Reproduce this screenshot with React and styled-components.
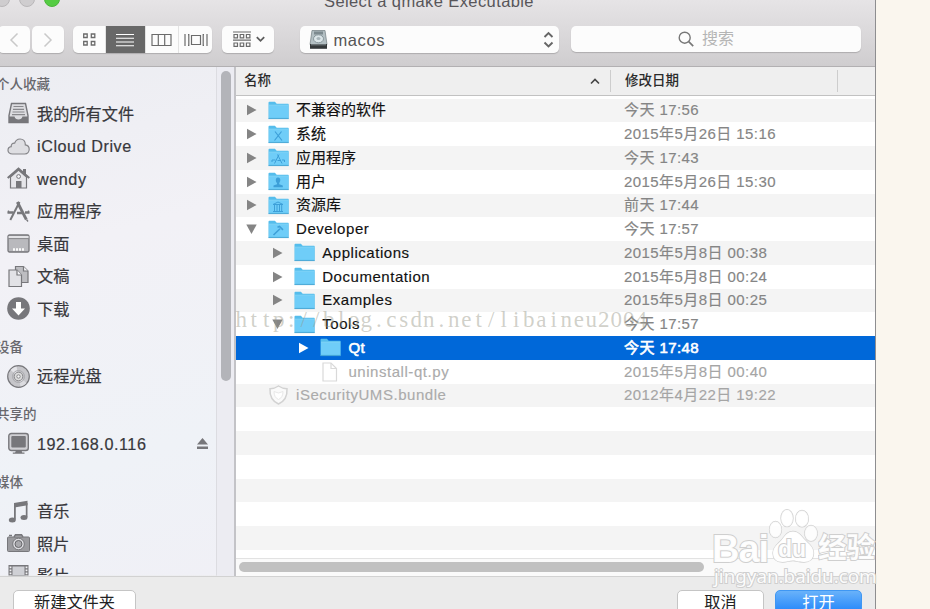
import React, { useState } from 'react';
import styled, { createGlobalStyle } from 'styled-components';

const favorites = [
    { label: "我的所有文件", icon: "files" },
    { label: "iCloud Drive", icon: "cloud" },
    { label: "wendy", icon: "home" },
    { label: "应用程序", icon: "apps" },
    { label: "桌面", icon: "desktop" },
    { label: "文稿", icon: "docs" },
    { label: "下载", icon: "download" }
];

const sections = [
    { title: "个人收藏", items: favorites },
    { title: "设备", items: [{ label: "远程光盘", icon: "disc" }] },
    { title: "共享的", items: [{ label: "192.168.0.116", icon: "monitor", eject: true }] },
    {
        title: "媒体",
        items: [
            { label: "音乐", icon: "music" },
            { label: "照片", icon: "camera" },
            { label: "影片", icon: "film" }
        ]
    }
];

const files = [
    { name: "不兼容的软件", date: "今天 17:56", level: 0, arrow: "right", kind: "folder" },
    { name: "系统", date: "2015年5月26日 15:16", level: 0, arrow: "right", kind: "folder", badge: "system" },
    { name: "应用程序", date: "今天 17:43", level: 0, arrow: "right", kind: "folder", badge: "apps" },
    { name: "用户", date: "2015年5月26日 15:30", level: 0, arrow: "right", kind: "folder", badge: "user" },
    { name: "资源库", date: "前天 17:44", level: 0, arrow: "right", kind: "folder", badge: "library" },
    { name: "Developer", date: "今天 17:57", level: 0, arrow: "down", kind: "folder", badge: "hammer" },
    { name: "Applications", date: "2015年5月8日 00:38", level: 1, arrow: "right", kind: "folder" },
    { name: "Documentation", date: "2015年5月8日 00:24", level: 1, arrow: "right", kind: "folder" },
    { name: "Examples", date: "2015年5月8日 00:25", level: 1, arrow: "right", kind: "folder" },
    { name: "Tools", date: "今天 17:57", level: 1, arrow: "down", kind: "folder" },
    { name: "Qt", date: "今天 17:48", level: 2, arrow: "right", kind: "folder" },
    { name: "uninstall-qt.py", date: "2015年5月8日 00:40", level: 2, kind: "file", disabled: true },
    { name: "iSecurityUMS.bundle", date: "2012年4月22日 19:22", level: 0, kind: "bundle", disabled: true }
];

const emptyRows = [13, 14, 15, 16, 17, 18, 19];

// Latin names are set a little wider than Chinese ones
const isLatin = (text) => /^[\x20-\x7e]+$/.test(text);

const sideIcons = {
    files: (
        <>
            <path d="M4.500 1.500h14l2.500 12v7H2v-7z" fill="#dcdce0" stroke="#77777b" strokeWidth="1.400" />
            <path d="M6.500 4.500h10M6 7.300h11M5.500 10h12M5 12.700h13" stroke="#88888c" strokeWidth="1.200" />
            <path d="M2 14.500h5.500q.7 3 4 3t4-3H21v6H2z" fill="#77777b" />
        </>
    ),
    cloud: (
        <path d="M5.500 19C2.500 19 1 17.200 1 15.200c0-2 1.500-3.400 3.200-3.600-.2-2.200 1.300-3.800 3.500-3.500C8.600 5.400 10.600 4 13 4c3.200 0 5.300 2.300 5.300 5.300v.6c2.300.3 3.900 2 3.900 4.400 0 2.600-1.800 4.700-4.400 4.700z" fill="#dedee2" stroke="#858589" strokeWidth="1.200" />
    ),
    home: (
        <>
            <path d="M3.500 10v11h16V10l-8-7z" fill="#e6e6ea" stroke="#77777b" strokeWidth="1.200" />
            <path d="M16 2h3v6l-3-3z" fill="#77777b" />
            <path d="M.7 11L11.500 1.800 22.300 11" fill="none" stroke="#77777b" strokeWidth="2.200" />
            <rect x="9" y="14" width="5.500" height="7" fill="#77777b" />
            <circle cx="11.600" cy="9.500" r="1.900" fill="#f2f2f5" stroke="#77777b" />
        </>
    ),
    apps: (
        <g stroke="#77777b" fill="none">
            <path d="M3.300 20L12.500 2" strokeWidth="2" />
            <path d="M10.300 2l9 17.500" strokeWidth="2.800" />
            <path d="M.5 12.500h6M10 13h5M18 12.500h4.500" strokeWidth="2.400" />
            <path d="M1.500 13v-2.500M21.500 13v-2.500M19.500 19.500l1.500 2" strokeWidth="1.300" />
        </g>
    ),
    desktop: (
        <>
            <rect x="1" y="3" width="21" height="17" rx="1.500" fill="#b9b9bd" stroke="#77777b" strokeWidth="1.300" />
            <path d="M1.600 5h20" stroke="#f2f2f5" strokeWidth="1.500" />
            <path d="M1.600 6.600h20" stroke="#88888c" />
            <path d="M6 17.500h11.500" stroke="#fafafa" strokeWidth="2.500" strokeDasharray="2 1" />
        </>
    ),
    docs: (
        <>
            <path d="M8.500 1.500h8l4.500 4.500v11.500H8.500z" fill="#bdbdc1" stroke="#77777b" strokeWidth="1.200" />
            <path d="M16.500 1.500V6H21" fill="#f2f2f5" stroke="#77777b" strokeWidth="1.200" />
            <path d="M2 5h8l4.500 5v11.500H2z" fill="#e2e2e6" stroke="#77777b" strokeWidth="1.200" />
            <path d="M10 5v5h4.500" fill="#f4f4f7" stroke="#77777b" strokeWidth="1.200" />
        </>
    ),
    download: (
        <>
            <circle cx="11.500" cy="11.500" r="11.300" fill="#77777b" />
            <path d="M9 5h5v6.500h4L11.500 18.500 5 11.500h4z" fill="#fff" />
        </>
    ),
    disc: (
        <>
            <circle cx="11.500" cy="11.500" r="10.800" fill="#c6c6ca" stroke="#77777b" strokeWidth="1.200" />
            <path d="M11.500 11.500L3.500 5Q6 2 9.500 1.500z" fill="#e4e4e8" />
            <path d="M11.500 11.500l8 6.500q-2.500 3-6 3.500z" fill="#dcdce0" />
            <circle cx="11.500" cy="11.500" r="6" fill="none" stroke="#aaaaae" />
            <circle cx="11.500" cy="11.500" r="4.300" fill="#ddd" stroke="#88888c" />
            <circle cx="11.500" cy="11.500" r="1.700" fill="#f5f5f5" stroke="#88888c" />
        </>
    ),
    monitor: (
        <>
            <rect x="1.800" y="1.500" width="19.500" height="17" rx="2.500" fill="#d0d0d4" stroke="#77777b" strokeWidth="1.400" />
            <rect x="4.300" y="4" width="14.500" height="11.500" rx="1" fill="#77777b" />
            <path d="M9 18.500h5.500l.7 2h2.300v1.200H5.800v-1.200h2.300z" fill="#77777b" />
        </>
    ),
    music: (
        <g fill="#77777b">
            <path d="M7 3l13.500-2.300v4.500L8.800 7.300V19.500H7z" />
            <path d="M18.800 3h1.700v14h-1.700z" />
            <ellipse cx="5.300" cy="20" rx="3.500" ry="2.500" />
            <ellipse cx="17" cy="17.400" rx="3.500" ry="2.500" />
        </g>
    ),
    camera: (
        <>
            <rect x=".5" y="5" width="22" height="14.500" rx="1" fill="#9b9b9f" stroke="#77777b" />
            <path d="M7 5l1.500-2.300h6L16 5M2 3.500h3" fill="#9b9b9f" stroke="#77777b" strokeWidth="1.500" />
            <circle cx="11.500" cy="12" r="5.800" fill="#dcdce0" stroke="#77777b" />
            <circle cx="11.500" cy="12" r="3.500" fill="#a9a9ad" stroke="#66666a" />
        </>
    ),
    film: (
        <>
            <rect x="1.500" y="0" width="20" height="22" fill="#77777b" />
            <rect x="5.500" y="1.500" width="12" height="8.500" fill="#cfd0d5" />
            <rect x="5.500" y="12" width="12" height="8" fill="#cfd0d5" />
            <path d="M3.500 1.500V20M19.500 1.500V20" stroke="#f2f2f5" strokeWidth="1.800" strokeDasharray="1.700 1.300" />
        </>
    )
};

const badges = {
    system: <path d="M7 6.500l7 9M13.500 6.500l-7 9" />,
    apps: <path d="M6.500 15.500L11 6.500M9.500 6.500l4.500 9M4 12h3.500M9.500 12.500h3M14 12h2.500M4 14v-2M16.500 14v-2" strokeWidth="1" />,
    user: <path d="M10 5.500c1.600 0 2.300 1.100 2.300 2.500S11.500 10.500 11.200 11v1.300l3.600 1.300v1.700H5.500v-1.700l3.500-1.300V11C8.300 10.300 7.800 9.200 7.800 8S8.500 5.500 10 5.500z" fill="#3d9fd8" stroke="none" />,
    library: <path d="M5 8.500L10 6l5 2.500zM5 15.500h10M6.500 9v6M9 9v6M11.500 9v6M13.700 9v6" strokeWidth="1" />,
    hammer: <path d="M5.500 15L12 8.700M9.500 7.300l2-.8 3.500 3.300" strokeWidth="1.600" />
};

const FolderIcon = ({ badge }) => (
    <svg width="21" height="19" viewBox="0 0 21 19">
        <path d="M.5 17.800V1.700q0-.9.900-.9h5.500l1.800 2h11.400q.6 0 .6.700v14.300z" fill="#55bdec" />
        <path d="M1 4.600h19.200v12.200H1z" fill="#6fcdf8" />
        <path d="M1 4.200h19.200" stroke="#8fdcfd" strokeWidth=".8" />
        <path d="M.5 17.600h20.200" stroke="#45a4d3" strokeWidth=".9" />
        {badge && <g fill="none" stroke="#3d9fd8" strokeWidth="1.200">{badges[badge]}</g>}
    </svg>
);

const FileIcon = () => (
    <svg width="21" height="20" viewBox="0 0 21 20">
        <path d="M3 1h8l5.500 5.500V19H3z" fill="#fff" stroke="#d9d9d9" strokeWidth="1.200" />
        <path d="M11 1v5.500h5.500" fill="none" stroke="#d9d9d9" strokeWidth="1.200" />
    </svg>
);

const BundleIcon = () => (
    <svg width="21" height="20" viewBox="0 0 21 20">
        <path d="M10.500 1q4 2.700 8.500 2.700.7 11-8.500 15.300Q1.300 14.700 2 3.700 6.500 3.700 10.500 1z" fill="#fafafa" stroke="#d2d2d2" strokeWidth="1.500" />
        <path d="M6 6.500l4.500 1.500 4.500-1.500q0 6-4.500 8-4.500-2-4.500-8z" fill="#fff" stroke="#e8e8e8" />
    </svg>
);

const RowIcon = ({ kind, badge }) => {
    if (kind === "file") return <FileIcon />;
    if (kind === "bundle") return <BundleIcon />;
    return <FolderIcon badge={badge} />;
};

const Paw = () => (
    <PawSvg width="54" height="58" viewBox="766 507 54 58">
        <g fill="#fff" fillOpacity=".8" stroke="#cfcfcf" strokeWidth="1.300">
            <ellipse cx="775.500" cy="529.500" rx="6" ry="8" />
            <ellipse cx="787" cy="518.200" rx="6" ry="8.500" />
            <ellipse cx="802" cy="518.700" rx="6.400" ry="8.200" />
            <ellipse cx="811" cy="533.300" rx="6.300" ry="7.800" />
            <path d="M793 531.500c6 0 8 4.500 12 8.500s8.500 7 8.500 13-4 9.300-10 9-7-1.500-10.500-1.500-6 1.500-10.500 1.500c-6 0-9.500-3-9.500-9s5-9 8.500-13 5.500-8.500 11.500-8.500z" fillOpacity=".95" />
        </g>
    </PawSvg>
);

const App = () => {
    const [selected, setSelected] = useState("Qt");

    return (
        <Page>
            <GlobalStyle />
            <Window>
                <TitleBar>
                    <Lights>
                        <Light />
                        <Light />
                        <Light $on />
                    </Lights>
                    <Title>Select a qmake Executable</Title>
                </TitleBar>
                <Toolbar>
                    <NavButton>
                        <svg width="12" height="16" viewBox="0 0 12 16"><path d="M9.500 1.500L3 8l6.500 6.500" fill="none" stroke="#c9c9c9" strokeWidth="1.500" /></svg>
                    </NavButton>
                    <NavButton>
                        <svg width="12" height="16" viewBox="0 0 12 16"><path d="M2.500 1.500L9 8l-6.500 6.500" fill="none" stroke="#c9c9c9" strokeWidth="1.500" /></svg>
                    </NavButton>
                    <Segments>
                        <Segment $width={33}>
                            <svg width="15" height="15" viewBox="0 0 15 15" fill="none" stroke="#6b6b6b" strokeWidth="1.300">
                                <path d="M1.700 2h3.500v3.500H1.700zM9.300 2h3.500v3.500H9.300zM1.700 9.500h3.500V13H1.700zM9.300 9.500h3.500V13H9.300z" />
                            </svg>
                        </Segment>
                        <Segment $width={39.5} $active>
                            <svg width="18" height="14" viewBox="0 0 18 14" stroke="#fff" strokeWidth="1.100">
                                <path d="M0 1.500h18M0 5.300h18M0 9h18M0 12.700h18" />
                            </svg>
                        </Segment>
                        <Segment $width={33.5}>
                            <svg width="21" height="14" viewBox="0 0 21 14" fill="none" stroke="#6b6b6b" strokeWidth="1.200">
                                <path d="M1 1.500h19v11H1zM7.300 1.500v11M13.700 1.500v11" />
                            </svg>
                        </Segment>
                        <Segment $width={33}>
                            <svg width="24" height="14" viewBox="0 0 24 14" fill="none" stroke="#6b6b6b" strokeWidth="1.200">
                                <path d="M7.500 2.500h9v9h-9zM1 1v12M4 1.700h.8v10.600H4M23 1v12M20 1.700h-.8v10.600h.8" />
                            </svg>
                        </Segment>
                    </Segments>
                    <ArrangeButton>
                        <svg width="18" height="17" viewBox="0 0 18 17" fill="none" stroke="#6b6b6b" strokeWidth="1.200">
                            <path d="M0 1h18M0 9.200h18M1 3.500h3.500v3.300H1zM7.200 3.500h3.500v3.300H7.200zM13.400 3.500h3.500v3.300h-3.500zM1 12h3.500v3.300H1zM7.200 12h3.500v3.300H7.200zM13.400 12h3.500v3.300h-3.500z" />
                        </svg>
                        <svg width="9" height="7" viewBox="0 0 9 7"><path d="M.8 1.200l3.700 3.600 3.700-3.600" fill="none" stroke="#5c5c5c" strokeWidth="1.800" /></svg>
                    </ArrangeButton>
                    <PathPopup>
                        <svg width="19" height="20" viewBox="0 0 19 20">
                            <path d="M3 .5h13l2 14H1z" fill="#b3bfc3" stroke="#7c888c" strokeWidth=".8" />
                            <path d="M5 1.500h9v3H5z" fill="#7d8a8f" />
                            <ellipse cx="9.500" cy="8.800" rx="5" ry="4" fill="#dbe5e8" stroke="#87959a" />
                            <ellipse cx="9.500" cy="8.600" rx="2" ry="1.500" fill="#a8b5ba" />
                            <path d="M1 14h17v4.800H1z" fill="#34383a" />
                            <path d="M2 14.800h15" stroke="#848e91" />
                        </svg>
                        <PathName>macos</PathName>
                        <svg width="11" height="18" viewBox="0 0 11 18"><path d="M1.500 6l4-4 4 4M1.500 11.500l4 4 4-4" fill="none" stroke="#666" strokeWidth="1.900" /></svg>
                    </PathPopup>
                    <SearchField>
                        <svg width="17" height="17" viewBox="0 0 17 17"><circle cx="6.700" cy="6.700" r="5.500" fill="none" stroke="#777" strokeWidth="1.400" /><path d="M10.700 10.700l4.500 4.500" stroke="#777" strokeWidth="1.700" /></svg>
                        <span>搜索</span>
                    </SearchField>
                </Toolbar>
                <Body>
                    <Sidebar>
                        {sections.map(({ title, items }) => (
                            <React.Fragment key={title}>
                                <SectionTitle>{title}</SectionTitle>
                                {items.map(({ label, icon, eject }) => (
                                    <SideItem key={label}>
                                        <svg width="23" height="23" viewBox="0 0 23 23">{sideIcons[icon]}</svg>
                                        <SideLabel $latin={isLatin(label)}>{label}</SideLabel>
                                        {eject && <svg width="11" height="12" viewBox="0 0 11 12"><path d="M5.500 0L11 6.500H0zM0 8.500h11V11H0z" fill="#77777b" /></svg>}
                                    </SideItem>
                                ))}
                            </React.Fragment>
                        ))}
                    </Sidebar>
                    <SideTrack><SideThumb /></SideTrack>
                    <Table>
                        <TableHead>
                            <NameHead>
                                名称
                                <svg width="10" height="7" viewBox="0 0 10 7"><path d="M1 5.500l4-4 4 4" fill="none" stroke="#444" strokeWidth="1.600" /></svg>
                            </NameHead>
                            <DateHead>修改日期</DateHead>
                        </TableHead>
                        <Rows>
                            {files.map(({ name, date, level, arrow, kind, badge, disabled }) => (
                                <Row
                                    key={name}
                                    $selected={name === selected}
                                    $disabled={disabled}
                                    onClick={() => !disabled && setSelected(name)}
                                >
                                    <NameCell $level={level}>
                                        <Arrow>
                                            {arrow && (
                                                <svg width="11" height="12" viewBox="0 0 11 12">
                                                    <path d={arrow === "right" ? "M1 .7l9.500 5.300L1 11.300z" : "M.3 1.500h10.400L5.500 11z"} fill="currentColor" />
                                                </svg>
                                            )}
                                        </Arrow>
                                        <RowIcon kind={kind} badge={badge} />
                                        <FileName $latin={isLatin(name)}>{name}</FileName>
                                    </NameCell>
                                    <DateCell>{date}</DateCell>
                                </Row>
                            ))}
                            {emptyRows.map((index) => <Row key={index} />)}
                        </Rows>
                        <BottomTrack><BottomThumb /></BottomTrack>
                    </Table>
                </Body>
                <Footer>
                    <Button $width={123}>新建文件夹</Button>
                    <Spacer />
                    <Button $width={87}>取消</Button>
                    <Button $width={87} $primary>打开</Button>
                </Footer>
            </Window>
            <BlogMark>
                {"http://blog.csdn.net/libaineu2004".split("").map((char, index) => <i key={index}>{char}</i>)}
            </BlogMark>
            <BaiduMark>
                <BaiText>Bai</BaiText>
                <Paw />
                <DuText>du</DuText>
                <JingText>经验</JingText>
                <UrlText>jingyan.baidu.com</UrlText>
            </BaiduMark>
        </Page>
    );
};

export default App;

// Styled Components
const GlobalStyle = createGlobalStyle`
    * {
        box-sizing: border-box;
    }

    body {
        margin: 0;
        overflow: hidden;
        font-family: "Liberation Sans", "Noto Sans CJK SC", sans-serif;
    }

    svg {
        display: block;
        flex: none;
    }
`;

const Page = styled.div`
    position: relative;
    width: 930px;
    height: 609px;
    overflow: hidden;
    background-color: #faf6ee;
`;

const Window = styled.div`
    display: flex;
    flex-direction: column;
    width: 876px;
    height: 609px;
    overflow: hidden;
    border-right: 1px solid #8e8e90;
    background: linear-gradient(#e6e4e6, #cfcdcf 66px, #ebebeb 66px);
`;

const TitleBar = styled.div`
    display: flex;
    align-items: flex-start;
    flex: none;
    height: 26px;
    overflow: hidden;
`;

const Lights = styled.div`
    display: flex;
    gap: 9px;
    width: 324px;
    margin: -9px 0 0 -6px;
`;

const Light = styled.span`
    width: 16px;
    height: 16px;
    border: 1px solid ${({ $on }) => ($on ? '#4bb53a' : '#b9b7b9')};
    border-radius: 50%;
    background-color: ${({ $on }) => ($on ? '#55cc43' : '#cfcdcf')};
`;

const Title = styled.div`
    margin: -9px 0 0 6px;
    color: #58565a;
    font-size: 16.5px;
    line-height: 20px;
    letter-spacing: 0.4px;
    white-space: nowrap;
`;

const Toolbar = styled.div`
    display: flex;
    flex: none;
    height: 41px;
    border-bottom: 1px solid #b2b0b2;
`;

const Control = styled.div`
    display: flex;
    align-items: center;
    flex: none;
    height: 27px;
    border-radius: 5px;
    background-color: #fcfcfc;
    box-shadow: 0 1px 1px rgba(0, 0, 0, 0.18);
`;

const NavButton = styled(Control)`
    justify-content: center;
    width: 32px;
    margin-right: 1.5px;

    &:first-child {
        margin-left: -2px;
    }
`;

const Segments = styled(Control)`
    width: 139px;
    margin-left: 8px;
    overflow: hidden;
`;

const Segment = styled.div`
    display: flex;
    align-items: center;
    justify-content: center;
    flex: none;
    width: ${({ $width }) => $width}px;
    height: 27px;
    border-right: 1px solid #e3e3e3;
    background-color: ${({ $active }) => ($active ? '#686868' : 'transparent')};

    &:last-child {
        border-right: 0;
    }
`;

const ArrangeButton = styled(Control)`
    width: 52px;
    margin-left: 10px;
    padding-left: 11px;
    gap: 5px;
`;

const PathPopup = styled(Control)`
    width: 259px;
    margin-left: 25.5px;
    padding: 0 5px 0 9px;
`;

const PathName = styled.span`
    flex: 1;
    padding: 2px 0 0 6px;
    color: #555;
    font-size: 16.5px;
    letter-spacing: 0.6px;
`;

const SearchField = styled(Control)`
    justify-content: center;
    width: 290px;
    height: 26px;
    margin-left: 12.5px;
    padding: 0 31px 0 11px;
    gap: 7px;
    color: #b5b5b5;
    font-size: 16px;
    line-height: 20px;
`;

const Body = styled.div`
    display: flex;
    flex: none;
    height: 508.5px;
    overflow: hidden;
`;

const Sidebar = styled.div`
    display: flex;
    flex-direction: column;
    flex: none;
    width: 217px;
    height: 513px;
    margin-top: -4.5px;
    border-right: 1px solid #dcdce1;
    background: linear-gradient(165deg, #ecedf2, #f2f1f6 35%, #eff2f7 75%, #f0f0f6);
    clip-path: inset(4.5px 0 0 0);
`;

const SectionTitle = styled.div`
    flex: none;
    height: 35px;
    padding-top: 12.5px;
    margin-left: -4px;
    color: #68686d;
    font-size: 13.5px;
    font-weight: 500;
    line-height: 20px;
`;

const SideItem = styled.div`
    display: flex;
    align-items: center;
    flex: none;
    height: 32.5px;
    padding: 0 8px 0 6.5px;
`;

const SideLabel = styled.span`
    flex: 1;
    padding-left: 7.5px;
    color: #38383c;
    font-size: 16.2px;
    line-height: 24px;
    letter-spacing: ${({ $latin }) => ($latin ? '0.55px' : '0')};
    white-space: nowrap;
    -webkit-text-stroke: 0.2px #38383c;
`;

const SideTrack = styled.div`
    flex: none;
    width: 19px;
    padding: 4px 0 0 4px;
    border-right: 2px solid #c3c3c7;
    background-color: #ececf2;
`;

const SideThumb = styled.div`
    width: 10px;
    height: 310px;
    border-radius: 5px;
    background-color: #b3b4b9;
`;

const Table = styled.div`
    display: flex;
    flex-direction: column;
    width: 639px;
    background-color: #fff;
`;

const TableHead = styled.div`
    display: flex;
    align-items: center;
    flex: none;
    height: 29px;
    border-bottom: 1px solid #c2c2c2;
    background-color: #efefef;
    color: #2b2b2b;
    font-size: 13.5px;
    font-weight: 500;
`;

const NameHead = styled.div`
    display: flex;
    align-items: center;
    justify-content: space-between;
    width: 375px;
    height: 22px;
    padding: 0 10px 0 8px;
    border-right: 1px solid #cdcdcd;
    line-height: 22px;
`;

const DateHead = styled.div`
    width: 227px;
    height: 22px;
    padding-left: 14px;
    border-right: 1px solid #cdcdcd;
    line-height: 22px;
`;

const Rows = styled.div`
    flex: none;
    height: 461.5px;
    padding-top: 2.6px;
    overflow: hidden;
`;

const Row = styled.div`
    display: flex;
    align-items: center;
    height: 23.75px;
    background-color: ${({ $selected }) => ($selected ? '#0068d9' : '#fff')};
    color: ${({ $selected, $disabled }) => ($selected ? '#fff' : $disabled ? '#ababab' : '#111')};
    font-size: 15px;
    white-space: nowrap;

    &:nth-child(odd) {
        background-color: ${({ $selected }) => ($selected ? '#0068d9' : '#f4f4f4')};
    }

    --muted: ${({ $selected, $disabled }) => ($selected ? '#fff' : $disabled ? '#a5a5a5' : '#858585')};
    -webkit-text-stroke: ${({ $selected }) => ($selected ? '0.6px #fff' : '0.15px currentColor')};
`;

const NameCell = styled.div`
    display: flex;
    align-items: center;
    flex: none;
    width: 388px;
    padding-left: ${({ $level }) => 10 + $level * 26.2}px;
`;

const Arrow = styled.span`
    width: 22px;
    color: var(--muted);
`;

const FileName = styled.span`
    padding-left: 7px;
    line-height: 22px;
    letter-spacing: ${({ $latin }) => ($latin ? '0.55px' : '0')};
`;

const DateCell = styled.span`
    color: var(--muted);
    line-height: 22px;
    letter-spacing: 0.43px;
`;

const BottomTrack = styled.div`
    flex: none;
    height: 18px;
    padding: 3.5px 0 0 3px;
    border-top: 1px solid #e2e2e2;
    background-color: #fafafa;
`;

const BottomThumb = styled.div`
    width: 465px;
    height: 10px;
    border-radius: 5px;
    background-color: #c1c1c1;
`;

const Footer = styled.div`
    display: flex;
    flex: none;
    height: 40px;
    padding: 13px 13px 0 13px;
    border-top: 1px solid #d2d2d2;
    background-color: #ebebeb;
    gap: 11px;
`;

const Spacer = styled.div`
    flex: 1;
`;

const Button = styled.button`
    width: ${({ $width }) => $width}px;
    height: 26px;
    padding: 0;
    border: 1px solid ${({ $primary }) => ($primary ? '#3f97f3' : '#c5c5c5')};
    border-radius: 5px;
    background: ${({ $primary }) => ($primary ? 'linear-gradient(#69b2fa, #1a80fb)' : '#fff')};
    color: ${({ $primary }) => ($primary ? '#fff' : '#222')};
    font-family: inherit;
    font-size: 16.2px;
    line-height: 23px;
`;

const BlogMark = styled.div`
    position: absolute;
    top: 305px;
    left: 235px;
    display: flex;
    color: rgba(150, 150, 135, 0.45);
    font-family: "Liberation Serif", serif;
    font-size: 23px;
    line-height: 30px;

    i {
        width: 12.5px;
        font-style: normal;
        text-align: center;
    }
`;

const BaiduMark = styled.div`
    position: absolute;
    top: 507px;
    left: 712px;
    width: 166px;
    height: 84px;
    color: rgba(255, 255, 255, 0.95);
    -webkit-text-stroke: 2px #cfcfcf;
    paint-order: stroke fill;
    white-space: nowrap;
`;

const BaiText = styled.span`
    position: absolute;
    top: 20px;
    left: 0;
    font-size: 38px;
    font-weight: bold;
    line-height: 44px;
    letter-spacing: -1px;
`;

const PawSvg = styled.svg`
    position: absolute;
    top: 0;
    left: 54px;
`;

const DuText = styled.span`
    position: absolute;
    top: 28px;
    left: 66px;
    font-size: 23px;
    font-weight: bold;
    line-height: 28px;
`;

const JingText = styled.span`
    position: absolute;
    top: 21px;
    left: 106px;
    width: 58px;
    overflow: hidden;
    font-size: 28.5px;
    font-weight: bold;
    line-height: 40px;
`;

const UrlText = styled.span`
    position: absolute;
    top: 56px;
    left: 2px;
    font-family: "Noto Sans", sans-serif;
    font-size: 18.8px;
    line-height: 26px;
`;
